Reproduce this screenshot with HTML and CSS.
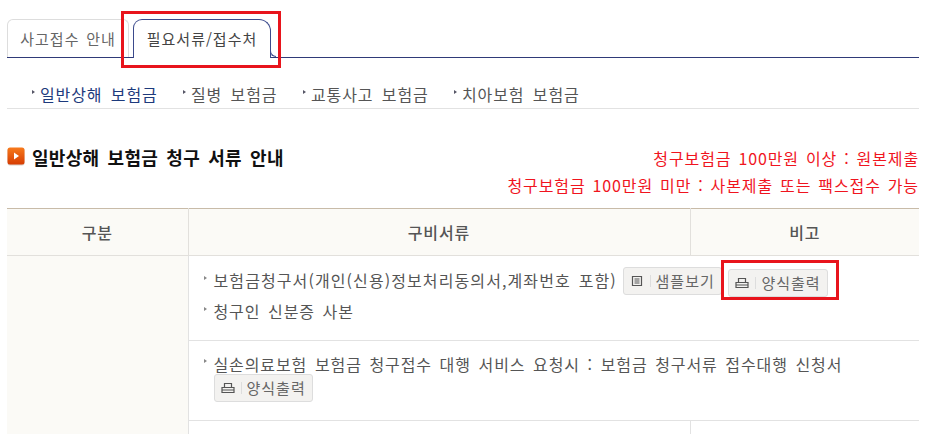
FILE: index.html
```html
<!DOCTYPE html>
<html lang="ko">
<head>
    <meta charset="UTF-8">
    <title>필요서류/접수처</title>
    <link rel="stylesheet" href="styles.css">
</head>
<body>
    <div class="page">
        <div class="tabs">
            <a class="tab">사고접수 안내</a>
            <a class="tab active">필요서류/접수처</a>
            <div class="mark mark-tab"></div>
        </div>
        <ul class="subnav">
            <li class="on">일반상해 보험금</li>
            <li class="w2">질병 보험금</li>
            <li>교통사고 보험금</li>
            <li>치아보험 보험금</li>
        </ul>
        <div class="heading">
            <h2>
                <svg class="ico-title" width="18" height="19" viewBox="0 0 18 19">
                    <defs>
                        <linearGradient id="ico-grad" x1="0" y1="0" x2="0" y2="1">
                            <stop offset="0" stop-color="#f77a1c"/>
                            <stop offset="1" stop-color="#d63c02"/>
                        </linearGradient>
                    </defs>
                    <rect x="0.5" y="1" width="17" height="17.5" rx="2.5" fill="#d9cfc8"/>
                    <rect x="0.5" y="0.5" width="17" height="17" rx="2.5" fill="url(#ico-grad)"/>
                    <path d="M7 5.5 L12 9 L7 12.5 Z" fill="#fff"/>
                </svg>
                일반상해 보험금 청구 서류 안내
            </h2>
            <div class="notice">
                <p>청구보험금 100만원 이상 : 원본제출</p>
                <p>청구보험금 100만원 미만 : 사본제출 또는 팩스접수 가능</p>
            </div>
        </div>
        <table class="docs">
            <colgroup>
                <col class="c1"><col class="c2"><col class="c3">
            </colgroup>
            <thead>
                <tr><th>구분</th><th>구비서류</th><th>비고</th></tr>
            </thead>
            <tbody>
                <tr class="r1">
                    <td class="side" rowspan="3"></td>
                    <td colspan="2">
                        <div class="item"><span class="item-text">보험금청구서(개인(신용)정보처리동의서,계좌번호 포함)</span>
                            <a class="btn"><svg width="14" height="12" viewBox="0 0 14 12"><path d="M2.5 1.5h9v9h-9z M4.5 4h5 M4.5 6h5 M4.5 8h5" fill="none" stroke="#555" stroke-width="1.2"/></svg><span>샘플보기</span></a>
                            <span class="btn-wrap"><a class="btn"><svg width="14" height="12" viewBox="0 0 14 12"><path d="M3.5 5.5v-4h7v4 M1 5.5h12v5H1z M1 8h12" fill="none" stroke="#555" stroke-width="1.2"/></svg><span>양식출력</span></a><i class="mark mark-btn"></i></span>
                        </div>
                        <div class="item">청구인 신분증 사본</div>
                    </td>
                </tr>
                <tr class="r2">
                    <td colspan="2">
                        <div class="item">실손의료보험 보험금 청구접수 대행 서비스 요청시 : 보험금 청구서류 접수대행 신청서</div>
                        <a class="btn btn-line"><svg width="14" height="12" viewBox="0 0 14 12"><path d="M3.5 5.5v-4h7v4 M1 5.5h12v5H1z M1 8h12" fill="none" stroke="#555" stroke-width="1.2"/></svg><span>양식출력</span></a>
                    </td>
                </tr>
                <tr class="r3"><td></td><td></td></tr>
            </tbody>
        </table>
    </div>
</body>
</html>
```

FILE: styles.css
```css
html, body {
    margin: 0;
    height: 434px;
    overflow: hidden;
    background-color: #fff;
}
body {
    font-family: "Noto Sans CJK KR", "Noto Sans", sans-serif;
    font-size: 16px;
    letter-spacing: 0.9px;
    word-spacing: 2.3px;
    color: #555;
}
.page {
    width: 912px;
    margin-left: 7px;
}

/* tabs */
.tabs {
    position: relative;
    display: flex;
    gap: 4px;
    height: 38px;
    padding-top: 19px;
    border-bottom: 1px solid #2f3a78;
}
.tab {
    width: 122px;
    height: 38px;
    line-height: 37px;
    box-sizing: border-box;
    text-align: center;
    font-size: 15px;
    letter-spacing: 1px;
    word-spacing: 1.5px;
    color: #666;
    border: 1px solid #ddd;
    border-bottom: 0;
    border-radius: 6px 6px 0 0;
}
.tab.active {
    position: relative;
    width: 138px;
    height: 39px;
    color: #444;
    background-color: #fff;
    border: 1px solid #3b4a8c;
    border-bottom: 0;
    border-radius: 9px 12px 0 0;
}
.tab.active:after {
    content: "";
    position: absolute;
    right: -6px;
    bottom: 1px;
    width: 5px;
    height: 10px;
    border-left: 1px solid #3b4a8c;
    border-bottom: 1px solid #3b4a8c;
    border-bottom-left-radius: 6px;
}
.mark {
    position: absolute;
    border: 3px solid #e8141c;
    box-sizing: border-box;
}
.mark-tab {
    left: 114px;
    top: 11px;
    width: 160px;
    height: 57px;
}

/* sub menu */
.subnav {
    display: flex;
    list-style: none;
    margin: 0;
    padding: 26px 0 0 25px;
    height: 24px;
    border-bottom: 1px solid #e2e2e2;
    line-height: 20px;
    word-spacing: 3px;
}
.subnav li {
    width: 151px;
    padding-left: 8px;
    box-sizing: border-box;
    white-space: nowrap;
    color: #555;
    position: relative;
}
.subnav li:before {
    content: "";
    position: absolute;
    left: 0;
    top: 6px;
    border-left: 3px solid #556;
    border-top: 2px solid transparent;
    border-bottom: 2px solid transparent;
}
.subnav li.on {
    color: #1d3a7c;
}
.subnav li.w2 {
    width: 120px;
}

/* title */
.heading {
    display: flex;
    justify-content: space-between;
    height: 99px;
    box-sizing: border-box;
    padding-top: 36px;
}
.heading h2 {
    display: flex;
    align-items: center;
    gap: 7px;
    height: 23px;
    margin: 0;
    font-size: 18px;
    font-weight: 700;
    letter-spacing: 0.3px;
    word-spacing: 2.8px;
    color: #111;
}
.notice {
    text-align: right;
    color: #f0141e;
    word-spacing: 1.6px;
}
.notice p {
    margin: 0;
    height: 27px;
    line-height: 27px;
}

/* table */
.docs {
    width: 912px;
    table-layout: fixed;
    border-collapse: collapse;
    border-top: 1px solid #c8bba8;
}
.c1 { width: 181px; }
.c2 { width: 502px; }
.c3 { width: 229px; }
.docs th {
    height: 46px;
    padding: 0;
    background-color: #fbfaf6;
    border-bottom: 1px solid #e2e0dc;
    border-left: 1px solid #e2e0dc;
    font-weight: 500;
    color: #555;
}
.docs th:first-child {
    border-left: 0;
}
.docs td {
    padding: 0 0 0 25px;
    border-bottom: 1px solid #e2e2e2;
    border-left: 1px solid #e2e2e2;
    vertical-align: top;
}
.docs td.side {
    background-color: #fbfaf6;
    border-left: 0;
    border-bottom: 0;
    padding: 0;
}
.r1 td { height: 84px; }
.r2 td { height: 79px; }
.r3 td { height: 13px; }
.item {
    position: relative;
    height: 31px;
    line-height: 31px;
    white-space: nowrap;
}
.r1 .item:first-child { margin-top: 9px; }
.r2 .item { margin-top: 11px; height: 22px; line-height: 24px; }
.item-text {
    margin-right: -2px;
    letter-spacing: 1.1px;
}
.item:before {
    content: "";
    position: absolute;
    left: -10px;
    top: 11px;
    border-left: 3px solid #888;
    border-top: 2px solid transparent;
    border-bottom: 2px solid transparent;
}
.r2 .item:before { top: 7px; }
.btn {
    display: inline-flex;
    align-items: center;
    height: 28px;
    box-sizing: border-box;
    padding: 0 6px 0 6px;
    vertical-align: middle;
    background-color: #f3f2f0;
    border: 1px solid #ddd;
    border-radius: 3px;
    font-size: 15px;
    letter-spacing: 1px;
    word-spacing: 0;
    line-height: 26px;
    color: #666;
}
.btn svg {
    margin-right: 5px;
    padding-right: 6px;
    border-right: 1px solid #ddd;
}
.item > .btn {
    margin-bottom: 4px;
}
.btn-wrap {
    position: relative;
    display: inline-block;
    vertical-align: middle;
    margin-bottom: 4px;
    margin-left: -1px;
}
.btn-line {
    vertical-align: top;
}
.mark-btn {
    left: -7px;
    top: -5px;
    width: 118px;
    height: 40px;
}
```
